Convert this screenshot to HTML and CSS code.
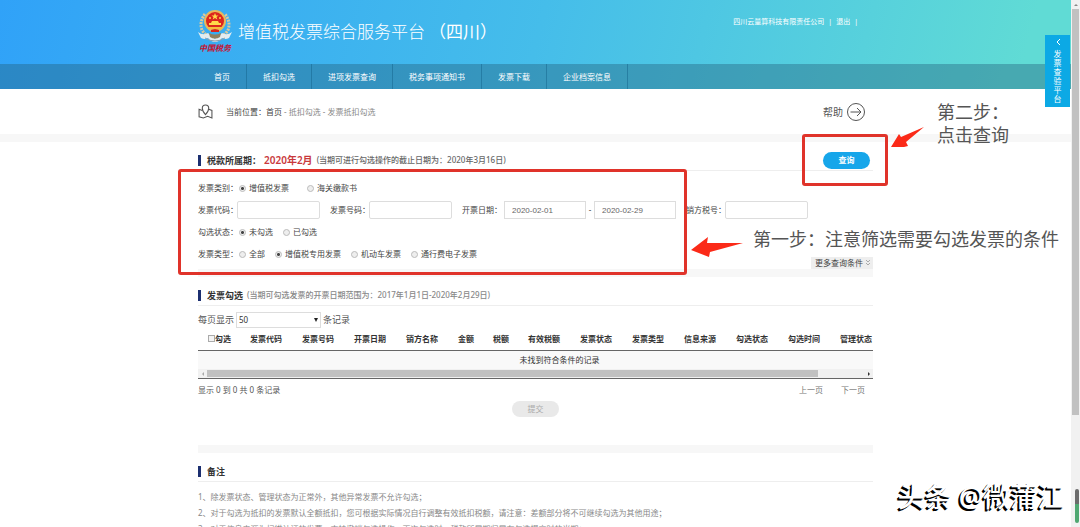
FILE: index.html
```html
<!DOCTYPE html>
<html lang="zh-CN">

<head>
    <meta charset="UTF-8">
    <meta name="viewport" content="width=device-width, initial-scale=1.0">
    <title>增值税发票综合服务平台</title>
    <link rel="stylesheet" href="styles.css">
</head>

<body>
    <div class="window">
        <div class="page">
            <header class="header">
                <div class="container header-inner">
                    <div class="logo">
                        <svg class="emblem" viewBox="0 0 36 34">
                            <path d="M8 5Q2 13 5 21Q9 28 18 29Q27 28 31 21Q34 13 28 5" fill="none" stroke="#d9c9a0" stroke-width="3" stroke-dasharray="2 1" />
                            <path d="M1 23Q6 27 11 24L15 28L18 30L21 28L25 24Q30 27 35 23L32 29Q28 31 25 29Q22 33 18 33Q14 33 11 29Q8 31 4 29Z" fill="#e4ecef" />
                            <path d="M8 29Q18 35 28 29" fill="none" stroke="#8ba0ac" stroke-width="1" />
                            <path d="M12 24Q18 27 24 24L23 28Q18 31 13 28Z" fill="#8e8160" />
                            <circle cx="18" cy="12" r="11" fill="#e9b85b" />
                            <circle cx="18" cy="12" r="9" fill="#dc261d" />
                            <path d="M18 4L19 6.500H21.500L19.500 8L20.300 10.500L18 9L15.700 10.500L16.500 8L14.500 6.500H17Z" fill="#ffd94a" />
                            <circle cx="13" cy="9" r="1" fill="#ffd94a" />
                            <circle cx="23" cy="9" r="1" fill="#ffd94a" />
                            <path d="M12 16V14H14L15 12H21L22 14H24V16Z" fill="#ffd94a" />
                            <path d="M10 18H26L24 20H12Z" fill="#f5bd3d" />
                            <path d="M14 21H22V23H14Z" fill="#dc261d" />
                        </svg>
                        <span class="logo-text">中国税务</span>
                    </div>
                    <h1>增值税发票综合服务平台</h1>
                    <span class="region">（四川）</span>
                    <div class="user">
                        <span>四川云量算科技有限责任公司</span>
                        <span>|</span>
                        <a href="#">退出</a>
                        <span>|</span>
                    </div>
                </div>
                <nav class="nav">
                    <div class="container nav-inner">
                        <a href="#">首页</a>
                        <a href="#">抵扣勾选</a>
                        <a href="#">进项发票查询</a>
                        <a href="#">税务事项通知书</a>
                        <a href="#">发票下载</a>
                        <a href="#">企业档案信息</a>
                    </div>
                </nav>
            </header>

            <div class="location">
                <div class="container location-inner">
                    <svg class="map-icon" viewBox="0 0 14 14">
                        <path d="M4 6L1 5V12L5 13L9 11.500L13 13V6L10 5" />
                        <path d="M7 10Q4 6.500 4 4A3 3 0 0 1 10 4Q10 6.500 7 10Z" />
                    </svg>
                    <div class="crumbs"><span>当前位置：</span><a href="#">首页</a> - 抵扣勾选 - 发票抵扣勾选</div>
                    <a class="help" href="#">帮助
                        <svg viewBox="0 0 20 20">
                            <circle cx="10" cy="10" r="8.500" />
                            <path d="M4.500 10H15M11 6L15 10L11 14" />
                        </svg>
                    </a>
                </div>
            </div>

            <main class="container main">
                <section>
                    <div class="title">
                        <h2>税款所属期：</h2>
                        <strong class="period">2020年2月</strong>
                        <span class="hint">(当期可进行勾选操作的截止日期为：2020年3月16日)</span>
                        <button class="query-btn">查询</button>
                    </div>
                    <form class="filters">
                        <div class="row">
                            <span class="name">发票类别：</span>
                            <div class="options wide">
                                <label><input type="radio" name="category" checked>增值税发票</label>
                                <label><input type="radio" name="category">海关缴款书</label>
                            </div>
                        </div>
                        <div class="row fields">
                            <div class="field">
                                <label class="name" for="code">发票代码：</label>
                                <input type="text" id="code">
                            </div>
                            <div class="field">
                                <label class="name" for="number">发票号码：</label>
                                <input type="text" id="number">
                            </div>
                            <div class="field dates">
                                <label class="name" for="dateFrom">开票日期：</label>
                                <input type="text" id="dateFrom" value="2020-02-01">
                                <span>-</span>
                                <input type="text" id="dateTo" value="2020-02-29" aria-label="开票日期">
                            </div>
                            <div class="field">
                                <label class="name" for="taxNo">销方税号：</label>
                                <input type="text" id="taxNo">
                            </div>
                        </div>
                        <div class="row">
                            <span class="name">勾选状态：</span>
                            <div class="options">
                                <label><input type="radio" name="state" checked>未勾选</label>
                                <label><input type="radio" name="state">已勾选</label>
                            </div>
                        </div>
                        <div class="last-row">
                            <div class="row">
                                <span class="name">发票类型：</span>
                                <div class="options">
                                    <label><input type="radio" name="type">全部</label>
                                    <label><input type="radio" name="type" checked>增值税专用发票</label>
                                    <label><input type="radio" name="type">机动车发票</label>
                                    <label><input type="radio" name="type">通行费电子发票</label>
                                </div>
                            </div>
                            <button type="button" class="more">更多查询条件
                                <svg viewBox="0 0 6 8"><path d="M1 1L3 3L5 1M1 4L3 6L5 4" /></svg>
                            </button>
                        </div>
                    </form>
                </section>

                <section class="band">
                    <div class="title">
                        <h2>发票勾选</h2>
                        <span class="hint light">(当期可勾选发票的开票日期范围为：2017年1月1日-2020年2月29日)</span>
                    </div>
                    <div class="page-size">
                        <label for="size">每页显示</label>
                        <div class="select">
                            <select id="size">
                                <option>50</option>
                            </select>
                        </div>
                        <span>条记录</span>
                    </div>
                    <div class="table-wrap">
                        <table>
                            <thead>
                                <tr>
                                    <th class="check"><label><input type="checkbox">勾选</label></th>
                                    <th>发票代码</th>
                                    <th>发票号码</th>
                                    <th>开票日期</th>
                                    <th>销方名称</th>
                                    <th class="short">金额</th>
                                    <th class="short">税额</th>
                                    <th>有效税额</th>
                                    <th>发票状态</th>
                                    <th>发票类型</th>
                                    <th>信息来源</th>
                                    <th>勾选状态</th>
                                    <th>勾选时间</th>
                                    <th class="last">管理状态</th>
                                </tr>
                            </thead>
                            <tbody>
                                <tr>
                                    <td colspan="14">未找到符合条件的记录</td>
                                </tr>
                            </tbody>
                        </table>
                        <div class="h-scroll">
                            <i class="left"></i>
                            <div class="h-track"><div class="h-thumb"></div></div>
                            <i class="right"></i>
                        </div>
                    </div>
                    <div class="info">
                        <span>显示 0 到 0 共 0 条记录</span>
                        <div class="pager">
                            <a href="#">上一页</a>
                            <a href="#">下一页</a>
                        </div>
                    </div>
                    <button class="submit-btn" disabled>提交</button>
                </section>

                <section class="band">
                    <div class="title">
                        <h2>备注</h2>
                    </div>
                    <div class="notes">
                        <p>1、除发票状态、管理状态为正常外，其他异常发票不允许勾选；</p>
                        <p>2、对于勾选为抵扣的发票默认全额抵扣，您可根据实际情况自行调整有效抵扣税额，请注意：差额部分将不可继续勾选为其他用途；</p>
                        <p>3、对于信息来源为扫描认证的发票，支持撤销勾选操作，再次勾选时，税款所属期归属在勾选提交时的当期；</p>
                    </div>
                </section>

                <!-- step marks over the form -->
                <div class="mark mark-form"></div>
                <div class="mark mark-query"></div>
                <svg class="arrow arrow-form" viewBox="0 0 52 20">
                    <path d="M0 13L17 0L16 6L52 6L19 15L18 20Z" />
                </svg>
                <svg class="arrow arrow-query" viewBox="0 0 34 22">
                    <path d="M0 20L8 7L10 10L33 0L15 15L17 19L13 20Z" />
                </svg>
                <p class="step step-one">第一步：注意筛选需要勾选发票的条件</p>
                <p class="step step-two">第二步：<br>点击查询</p>
            </main>

            <a class="side-tab" href="#">
                <svg viewBox="0 0 6 8"><path d="M5 1L2 4L5 7" /></svg>
                <span>发票查验平台</span>
            </a>
            <div class="watermark">头条 @微蒲江</div>
        </div>
        <div class="v-scroll">
            <i></i>
            <div class="v-thumb"></div>
            <div class="float-bar"></div>
        </div>
    </div>
</body>

</html>
```

FILE: styles.css
```css
* {
  margin: 0;
  padding: 0;
  box-sizing: border-box;
}

body {
  font-family: "Noto Sans", "Noto Sans CJK SC", sans-serif;
  font-size: 8px;
  line-height: 12px;
  color: #555;
  background: #fff;
}

input, select, button {
  font: inherit;
  color: inherit;
}

a {
  color: inherit;
  text-decoration: none;
}

.window {
  display: flex;
  height: 100vh;
  overflow: hidden;
}

.page {
  position: relative;
  flex: 1;
  min-width: 0;
  overflow: hidden;
}

.container {
  width: 63%;
  min-width: 675px;
  margin: 0 auto;
}

/* header */
.header {
  background: linear-gradient(105deg, #30a2f8 0%, #45bdea 50%, #60dbd5 95%);
  color: #fff;
}

.header-inner {
  display: flex;
  height: 64px;
  align-items: center;
}

.logo {
  display: flex;
  flex-direction: column;
  align-items: center;
  width: 34px;
  margin-right: 6px;
}

.emblem {
  width: 36px;
  height: 34px;
}

.logo-text {
  font-family: "Liberation Serif", "Noto Sans CJK SC", serif;
  font-size: 8px;
  font-weight: bold;
  font-style: italic;
  color: #c8102e;
  white-space: nowrap;
}

.header h1, .region {
  font-size: 17px;
  font-weight: 300;
  line-height: 24px;
  white-space: nowrap;
}

.region {
  margin-left: 4px;
  font-weight: 400;
}

.user {
  display: flex;
  gap: 4px;
  align-self: flex-start;
  margin-left: auto;
  padding: 16px 15px 0 0;
  font-size: 7px;
}

.nav {
  background: rgba(34, 96, 122, 0.4);
}

.nav-inner {
  display: flex;
}

.nav a {
  padding: 0 16px;
  line-height: 25px;
  border-right: 1px solid rgba(20, 100, 140, 0.5);
}

/* location */
.location {
  border-bottom: 8px solid #f7f7f7;
}

.location-inner {
  display: flex;
  align-items: center;
  height: 45px;
}

.map-icon {
  width: 15px;
  height: 15px;
  margin-right: 13px;
}

.map-icon, .help svg {
  fill: none;
  stroke: #555;
  stroke-width: 1;
}

.crumbs {
  color: #888;
}

.crumbs span, .crumbs a {
  color: #444;
}

.help {
  display: flex;
  align-items: center;
  gap: 3px;
  margin-left: auto;
  padding-right: 7px;
  font-size: 10px;
}

.help svg {
  width: 20px;
  height: 20px;
}

/* sections */
.main {
  position: relative;
}

.band {
  border-top: 8px solid #f7f7f7;
}

.title {
  display: flex;
  align-items: center;
  height: 29px;
  padding-top: 8px;
  border-bottom: 1px solid #eee;
}

.title h2 {
  padding-left: 6px;
  border-left: 3px solid #1c2f70;
  font-size: 9px;
  line-height: 11px;
  color: #333;
}

.period {
  margin-left: 3px;
  font-size: 10px;
  font-weight: 600;
  color: #c9393c;
}

.hint {
  margin-left: 4px;
  font-weight: 500;
  color: #666;
}

.light {
  color: #888;
}

.query-btn {
  width: 47px;
  height: 17px;
  margin: 0 3px 0 auto;
  border: none;
  border-radius: 9px;
  background: #16a6ea;
  color: #fff;
  font-weight: bold;
}

/* filters */
.filters {
  padding-top: 6px;
  color: #444;
}

.row {
  display: flex;
  align-items: center;
  height: 22px;
}

.name {
  width: 39px;
  white-space: nowrap;
}

.fields {
  gap: 10px;
}

.field {
  display: flex;
  align-items: center;
}

.dates .name {
  width: 42px;
}

.dates span {
  width: 8px;
  text-align: center;
}

input[type="text"] {
  width: 83px;
  height: 18px;
  padding: 0 7px;
  border: 1px solid #ddd;
  border-radius: 2px;
  outline: none;
  background: #fff;
  font-family: "Liberation Sans", sans-serif;
  color: #666;
}

.dates input[type="text"] {
  width: 82px;
  border-radius: 0;
}

.options {
  display: flex;
  gap: 10px;
  padding-left: 2px;
}

.wide {
  gap: 18px;
}

.options label {
  display: flex;
  align-items: center;
  gap: 3px;
}

input[type="radio"] {
  appearance: none;
  width: 7px;
  height: 7px;
  border: 1px solid #bbb;
  border-radius: 50%;
  background: #eee;
}

input[type="radio"]:checked {
  background: radial-gradient(#444 0 1px, #eee 2px);
}

.last-row {
  display: flex;
  justify-content: space-between;
  height: 26px;
}

.more {
  display: flex;
  align-items: center;
  align-self: flex-end;
  gap: 2px;
  height: 12px;
  padding: 0 2px 0 4px;
  border: none;
  background: #eee;
}

.more svg {
  width: 6px;
  height: 8px;
  fill: none;
  stroke: #aaa;
}

/* table */
.page-size {
  display: flex;
  align-items: center;
  gap: 2px;
  padding-top: 6px;
  font-size: 9px;
}

.select {
  position: relative;
}

.select::after {
  content: "";
  position: absolute;
  right: 3px;
  top: 6px;
  border: 2px solid transparent;
  border-top: 4px solid #222;
  border-bottom: none;
}

.select select {
  display: block;
  appearance: none;
  width: 85px;
  height: 16px;
  padding-left: 2px;
  border: 1px solid #ddd;
  background: #fff;
  font-size: 8px;
  color: #333;
}

.table-wrap {
  overflow: hidden;
  border-bottom: 1px solid #666;
}

table {
  width: 723px;
  table-layout: fixed;
  border-collapse: collapse;
  color: #333;
}

th {
  width: 52px;
  height: 22px;
  padding-left: 10px;
  text-align: left;
  white-space: nowrap;
  border-bottom: 1px solid #666;
}

.check {
  width: 42px;
}

.check label {
  display: flex;
  align-items: center;
}

.check input {
  appearance: none;
  width: 7px;
  height: 7px;
  border: 1px solid #aaa;
  background: #f4f4f4;
}

.short {
  width: 35px;
}

.last {
  width: 91px;
}

td {
  height: 19px;
  text-align: center;
  background: #f9f9f9;
}

.h-scroll {
  display: flex;
  align-items: center;
  height: 9px;
  background: #f1f1f1;
}

.h-scroll i {
  width: 9px;
}

.left::before, .right::before {
  content: "";
  display: block;
  width: 2px;
  margin-left: 4px;
  border: 2px solid transparent;
}

.left::before {
  margin-left: 2px;
  border-left: none;
  border-right: 2px solid #aaa;
}

.right::before {
  border-right: none;
  border-left: 2px solid #333;
}

.h-track {
  flex: 1;
}

.h-thumb {
  width: 93%;
  height: 7px;
  background: #c1c1c1;
}

.info {
  display: flex;
  justify-content: space-between;
  line-height: 22px;
}

.pager {
  display: flex;
  gap: 18px;
  padding-right: 8px;
  color: #777;
}

.submit-btn {
  display: block;
  width: 47px;
  height: 16px;
  margin: 0 auto 28px;
  border: none;
  border-radius: 8px;
  background: #e9e9e9;
  color: #aaa;
}

.notes {
  padding-top: 7px;
  line-height: 16px;
  color: #888;
  white-space: nowrap;
}

/* step marks */
.mark {
  position: absolute;
  border: 3px solid #e0332a;
  border-radius: 3px;
}

.mark-form {
  left: -20px;
  top: 27px;
  width: 509px;
  height: 106px;
}

.mark-query {
  left: 604px;
  top: -8px;
  width: 86px;
  height: 52px;
}

.arrow {
  position: absolute;
  fill: #fb2a18;
}

.arrow-form {
  left: 493px;
  top: 95px;
  width: 52px;
}

.arrow-query {
  left: 693px;
  top: -15px;
  width: 34px;
}

.step {
  position: absolute;
  font-size: 18px;
  line-height: 23px;
  white-space: nowrap;
}

.step-one {
  left: 555px;
  top: 86px;
}

.step-two {
  left: 739px;
  top: -41px;
}

/* things fixed to the window edge */
.side-tab {
  position: absolute;
  right: 1px;
  top: 35px;
  display: flex;
  flex-direction: column;
  align-items: center;
  width: 25px;
  height: 72px;
  padding-top: 3px;
  background: #0ca9e5;
  color: #fff;
}

.side-tab svg {
  width: 6px;
  height: 8px;
  margin-bottom: 3px;
  fill: none;
  stroke: #fff;
}

.side-tab span {
  width: 8px;
  line-height: 9px;
}

.watermark {
  position: absolute;
  right: 7px;
  bottom: 12px;
  font-size: 27px;
  line-height: 36px;
  font-weight: 500;
  color: #fff;
  text-shadow: -1px 1px 0 #000, -2px 2px 0 #000;
}

.v-scroll {
  position: relative;
  width: 9px;
  padding: 0 1px;
  background: #f1f1f1;
}

.v-scroll i {
  display: block;
  width: 4px;
  margin: 4px auto 3px;
  border: 2px solid transparent;
  border-top: none;
  border-bottom: 2px solid #888;
}

.v-thumb {
  height: 77%;
  background: #c1c1c1;
}

.float-bar {
  position: absolute;
  right: 1px;
  bottom: 4px;
  width: 4px;
  height: 34px;
  border-radius: 2px;
  background: linear-gradient(#6b6b6b 45%, #4fa771 45%);
}
```
